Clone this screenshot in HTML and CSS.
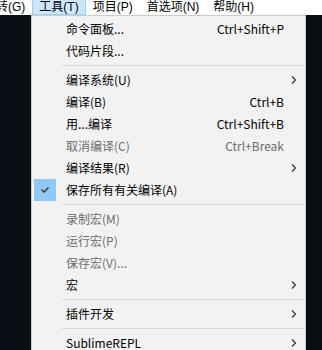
FILE: index.html
```html
<!DOCTYPE html>
<html lang="zh">
<head>
<meta charset="utf-8">
<link rel="stylesheet" href="styles.css">
</head>
<body>
<div class="menubar">
  <span class="mb-item first">跳转(G)</span>
  <span class="mb-item active">工具(T)</span>
  <span class="mb-item">项目(P)</span>
  <span class="mb-item">首选项(N)</span>
  <span class="mb-item">帮助(H)</span>
</div>
<div class="workspace">
  <div class="menu">
    <div class="row"><span class="icon"></span><span class="label">命令面板...</span><span class="key">Ctrl+Shift+P</span><span class="sub"></span></div>
    <div class="row"><span class="icon"></span><span class="label">代码片段...</span><span class="key"></span><span class="sub"></span></div>
    <div class="sep"></div>
    <div class="row"><span class="icon"></span><span class="label">编译系统(U)</span><span class="key"></span><span class="sub"><svg width="6" height="8" viewBox="0 0 6 8"><polyline points="1,0.5 4.5,4 1,7.5" fill="none" stroke="#333" stroke-width="1.2"/></svg></span></div>
    <div class="row"><span class="icon"></span><span class="label">编译(B)</span><span class="key">Ctrl+B</span><span class="sub"></span></div>
    <div class="row"><span class="icon"></span><span class="label">用...编译</span><span class="key">Ctrl+Shift+B</span><span class="sub"></span></div>
    <div class="row disabled"><span class="icon"></span><span class="label">取消编译(C)</span><span class="key">Ctrl+Break</span><span class="sub"></span></div>
    <div class="row"><span class="icon"></span><span class="label">编译结果(R)</span><span class="key"></span><span class="sub"><svg width="6" height="8" viewBox="0 0 6 8"><polyline points="1,0.5 4.5,4 1,7.5" fill="none" stroke="#333" stroke-width="1.2"/></svg></span></div>
    <div class="row"><span class="icon checked"><svg width="10" height="8" viewBox="0 0 10 8"><polyline points="1.5,3.5 4,6 8.5,1.5" fill="none" stroke="#333" stroke-width="1.3"/></svg></span><span class="label">保存所有有关编译(A)</span><span class="key"></span><span class="sub"></span></div>
    <div class="sep"></div>
    <div class="row disabled"><span class="icon"></span><span class="label">录制宏(M)</span><span class="key"></span><span class="sub"></span></div>
    <div class="row disabled"><span class="icon"></span><span class="label">运行宏(P)</span><span class="key"></span><span class="sub"></span></div>
    <div class="row disabled"><span class="icon"></span><span class="label">保存宏(V)...</span><span class="key"></span><span class="sub"></span></div>
    <div class="row"><span class="icon"></span><span class="label">宏</span><span class="key"></span><span class="sub"><svg width="6" height="8" viewBox="0 0 6 8"><polyline points="1,0.5 4.5,4 1,7.5" fill="none" stroke="#333" stroke-width="1.2"/></svg></span></div>
    <div class="sep"></div>
    <div class="row"><span class="icon"></span><span class="label">插件开发</span><span class="key"></span><span class="sub"><svg width="6" height="8" viewBox="0 0 6 8"><polyline points="1,0.5 4.5,4 1,7.5" fill="none" stroke="#333" stroke-width="1.2"/></svg></span></div>
    <div class="sep"></div>
    <div class="row"><span class="icon"></span><span class="label">SublimeREPL</span><span class="key"></span><span class="sub"><svg width="6" height="8" viewBox="0 0 6 8"><polyline points="1,0.5 4.5,4 1,7.5" fill="none" stroke="#333" stroke-width="1.2"/></svg></span></div>
  </div>
</div>
</body>
</html>
```
FILE: styles.css
```css
html, body {
  margin: 0;
  padding: 0;
  width: 322px;
  height: 350px;
  overflow: hidden;
  background: #0a0d14;
  font-family: "Noto Sans CJK SC", "Noto Sans", sans-serif;
  font-size: 12px;
  color: #000;
}
.menubar {
  height: 15px;
  background: #fff;
  display: flex;
  white-space: nowrap;
  font-family: "Liberation Sans", "Noto Sans CJK SC", sans-serif;
}
.mb-item {
  box-sizing: border-box;
  height: 15px;
  line-height: 14px;
  padding: 0 6px;
  border: 1px solid transparent;
  border-top: 0;
  flex: none;
}
.mb-item.first {
  margin-left: -23px;
}
.mb-item.active {
  background: #cce8ff;
  border-color: #99d1ff;
}
.workspace {
  position: relative;
  height: 335px;
}
.menu {
  position: absolute;
  left: 31px;
  top: 0;
  width: 275px;
  box-sizing: border-box;
  border: 1px solid #cccccc;
  background: #f2f2f2;
  padding: 2px;
}
.row {
  display: flex;
  align-items: center;
  height: 22px;
  line-height: 22px;
  white-space: nowrap;
}
.icon {
  width: 22px;
  height: 22px;
  flex: none;
  margin-right: 10px;
  display: flex;
  align-items: center;
  justify-content: center;
}
.icon.checked {
  background: #90c8f6;
}
.label {
  flex: 1;
}
.key {
  flex: none;
}
.sub {
  width: 19px;
  flex: none;
  display: flex;
  align-items: center;
  justify-content: center;
}
.disabled {
  color: #6d6d6d;
}
.sep {
  height: 1px;
  margin: 3px 0 3px 28px;
  background: #d7d7d7;
}
```
